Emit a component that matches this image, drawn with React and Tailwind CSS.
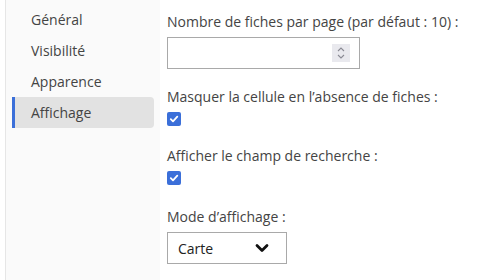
import React from "react";

function Check() {
  return (
    <span className="flex h-[14px] w-[14px] items-center justify-center rounded-[2px] bg-[#3b6fd9]">
      <svg width="10" height="10" viewBox="0 0 10 10">
        <polyline points="1.8,5.2 4,7.3 8.3,2.6" fill="none" stroke="white" strokeWidth="1.8" strokeLinecap="round" strokeLinejoin="round" />
      </svg>
    </span>
  );
}

export default function App() {
  const items = ["Général", "Visibilité", "Apparence", "Affichage"];
  return (
    <div className="flex h-[280px] w-[492px] bg-white text-[14px] text-[#444]" style={{ fontFamily: '"Open Sans", sans-serif' }}>
      <div className="ml-[5px] w-[155px] shrink-0 border-l border-[#e6e6e6] bg-[#fafafa] px-[6px] pt-[4px]">
        {items.map((it, i) => (
          <div
            key={it}
            className={
              i === 3
                ? "flex h-[31px] items-center rounded-r-[4px] border-l-[3px] border-[#3b6fd9] bg-[#e2e2e2] pl-[16px]"
                : "flex h-[31px] items-center pl-[19px]"
            }
          >
            {it}
          </div>
        ))}
      </div>
      <div className="flex flex-col pl-[7px] pt-[12px]">
        <div className="h-[20px] leading-[20px]">Nombre de fiches par page (par défaut : 10) :</div>
        <div className="mt-[5px] flex h-[32px] w-[193px] items-center justify-end border border-[#a9a9a9] pr-[9px]">
          <div className="flex h-[18px] w-[18px] flex-col items-center justify-center bg-[#e9e9ee]">
            <svg width="10" height="14" viewBox="0 0 10 14">
              <polyline points="2,5 5,2 8,5" fill="none" stroke="#8a8a94" strokeWidth="1.1" />
              <polyline points="2,9 5,12 8,9" fill="none" stroke="#8a8a94" strokeWidth="1.1" />
            </svg>
          </div>
        </div>
        <div className="mt-[18px] h-[20px] leading-[20px]">Masquer la cellule en l’absence de fiches :</div>
        <div className="mt-[5px]"><Check /></div>
        <div className="mt-[20px] h-[20px] leading-[20px]">Afficher le champ de recherche :</div>
        <div className="mt-[5px]"><Check /></div>
        <div className="mt-[22px] h-[20px] leading-[20px]">Mode d’affichage :</div>
        <div className="mt-[5px] flex h-[32px] w-[120px] items-center justify-between border border-[#a9a9a9] pl-[10px] pr-[17px] text-[#222]">
          <span>Carte</span>
          <svg width="14" height="10" viewBox="0 0 14 10">
            <polyline points="2,2.5 7,7.5 12,2.5" fill="none" stroke="#111" strokeWidth="2.8" strokeLinecap="round" strokeLinejoin="round" />
          </svg>
        </div>
      </div>
    </div>
  );
}
